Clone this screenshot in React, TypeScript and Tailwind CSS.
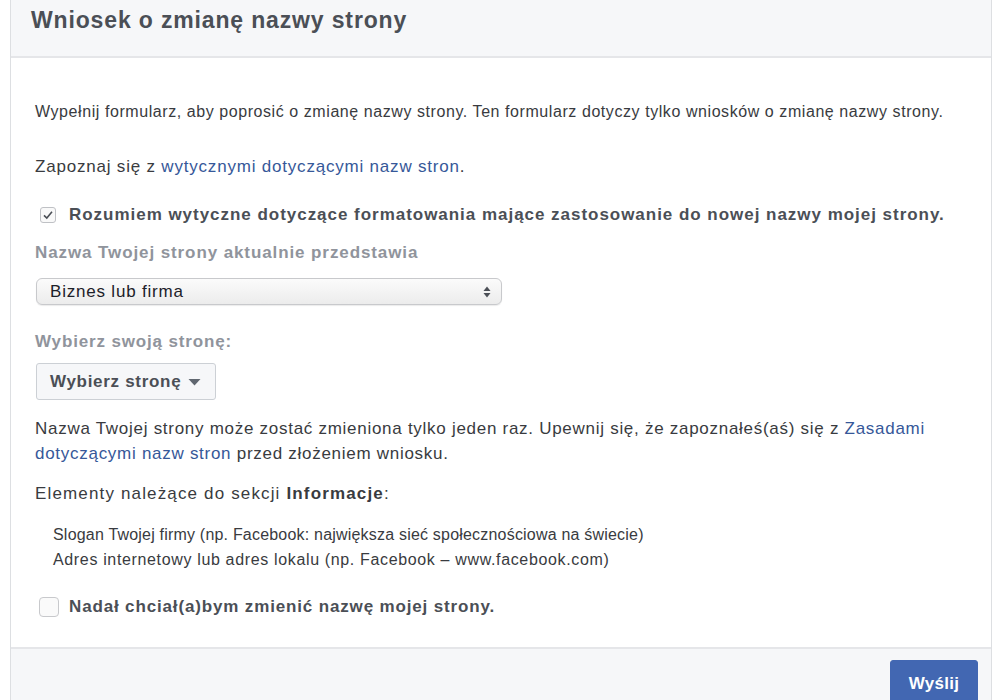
import React from "react";

export default function App() {
  return (
    <div className="w-[1000px] h-[700px] bg-white overflow-hidden" style={{ fontFamily: '"Liberation Sans", Arial, sans-serif' }}>
      <div className="ml-[10px] w-[982px] h-full border-l border-r border-[#dddfe2] flex flex-col">
        <div className="h-[58px] bg-[#f6f7f9] border-b-2 border-[#e5e6e9] pl-[20px] pt-[5px]">
          <h1 className="text-[23px] leading-[30px] font-bold text-[#4b4f56] tracking-[0.85px]">Wniosek o zmianę nazwy strony</h1>
        </div>
        <div className="flex-1 pl-[24px] pr-[20px] pt-[41px] text-[#393b40]">
          <p className="leading-[25px] text-[16px] tracking-[0.57px]">Wypełnij formularz, aby poprosić o zmianę nazwy strony. Ten formularz dotyczy tylko wniosków o zmianę nazwy strony.</p>
          <p className="leading-[25px] mt-[30px] text-[17px] tracking-[0.8px]">
            Zapoznaj się z <span className="text-[#365899]">wytycznymi dotyczącymi nazw stron</span>.
          </p>
          <div className="flex items-center mt-[23px] h-[25px] pl-[5px]">
            <span className="w-[16px] h-[16px] border border-[#bfc1c5] rounded-[3px] bg-[#f9f9f9] flex items-center justify-center mr-[13px]">
              <svg width="12" height="12" viewBox="0 0 12 12"><path d="M2 6.3 L4.8 9 L10 2.8" fill="none" stroke="#4b4f56" strokeWidth="1.6" /></svg>
            </span>
            <span className="font-bold text-[#4b4f56] text-[17px] tracking-[0.97px] whitespace-nowrap">Rozumiem wytyczne dotyczące formatowania mające zastosowanie do nowej nazwy mojej strony.</span>
          </div>
          <div className="mt-[13px] leading-[25px] font-bold text-[#90949c] text-[17px] tracking-[0.9px]">Nazwa Twojej strony aktualnie przedstawia</div>
          <div className="mt-[13px] w-[466px] h-[27px] ml-[1px] rounded-[6px] border border-[#c8c9cc] bg-gradient-to-b from-[#fbfbfb] to-[#ececec] shadow-[0_1px_1px_rgba(0,0,0,0.08)] flex items-center justify-between pl-[13px] pr-[10px]">
            <span className="text-[17px] tracking-[0.8px] text-[#1d2129]">Biznes lub firma</span>
            <svg width="8" height="12" viewBox="0 0 8 12"><path d="M4 0.5 L7.5 5 H0.5 Z" fill="#4b4f56" /><path d="M4 11.5 L7.5 7 H0.5 Z" fill="#4b4f56" /></svg>
          </div>
          <div className="mt-[24px] leading-[25px] font-bold text-[#90949c] text-[17px] tracking-[0.85px]">Wybierz swoją stronę:</div>
          <div className="mt-[9px] ml-[1px] w-[180px] h-[37px] border border-[#ccd0d5] rounded-[3px] bg-[#f6f7f9] flex items-center pl-[13px] gap-[7px]">
            <span className="text-[17px] tracking-[0.7px] font-bold text-[#4b4f56]">Wybierz stronę</span>
            <svg width="13" height="8" viewBox="0 0 13 8"><path d="M0.5 1 H12.5 L6.5 7.5 Z" fill="#606770" /></svg>
          </div>
          <p className="mt-[16px] leading-[25px] text-[17px] tracking-[0.72px]">
            Nazwa Twojej strony może zostać zmieniona tylko jeden raz. Upewnij się, że zapoznałeś(aś) się z <span className="text-[#365899]">Zasadami<br />dotyczącymi nazw stron</span> przed złożeniem wniosku.
          </p>
          <p className="mt-[15px] leading-[25px] text-[17px] tracking-[1.15px]">
            Elementy należące do sekcji <b>Informacje</b>:
          </p>
          <div className="mt-[16px] pl-[18px] text-[16px] tracking-[0.4px] leading-[25px]">
            <div className="tracking-[0.2px]">Slogan Twojej firmy (np. Facebook: największa sieć społecznościowa na świecie)</div>
            <div className="tracking-[0.65px]">Adres internetowy lub adres lokalu (np. Facebook – www.facebook.com)</div>
          </div>
          <div className="flex items-center mt-[22px] h-[25px] pl-[4px]">
            <span className="w-[20px] h-[20px] border border-[#c8c9cc] rounded-[4px] bg-[#fafafa] mr-[10px]"></span>
            <span className="font-bold text-[#4b4f56] text-[17px] tracking-[0.85px]">Nadał chciał(a)bym zmienić nazwę mojej strony.</span>
          </div>
        </div>
        <div className="h-[53px] bg-[#f6f7f9] border-t-2 border-[#e5e6e9] flex justify-end pr-[13px] pt-[11px]">
          <div className="w-[88px] h-[44px] bg-[#4267b2] rounded-[3px] border border-[#4267b2] flex items-start justify-center pt-[10px] text-white font-bold text-[17px] tracking-[0.3px]">Wyślij</div>
        </div>
      </div>
    </div>
  );
}
